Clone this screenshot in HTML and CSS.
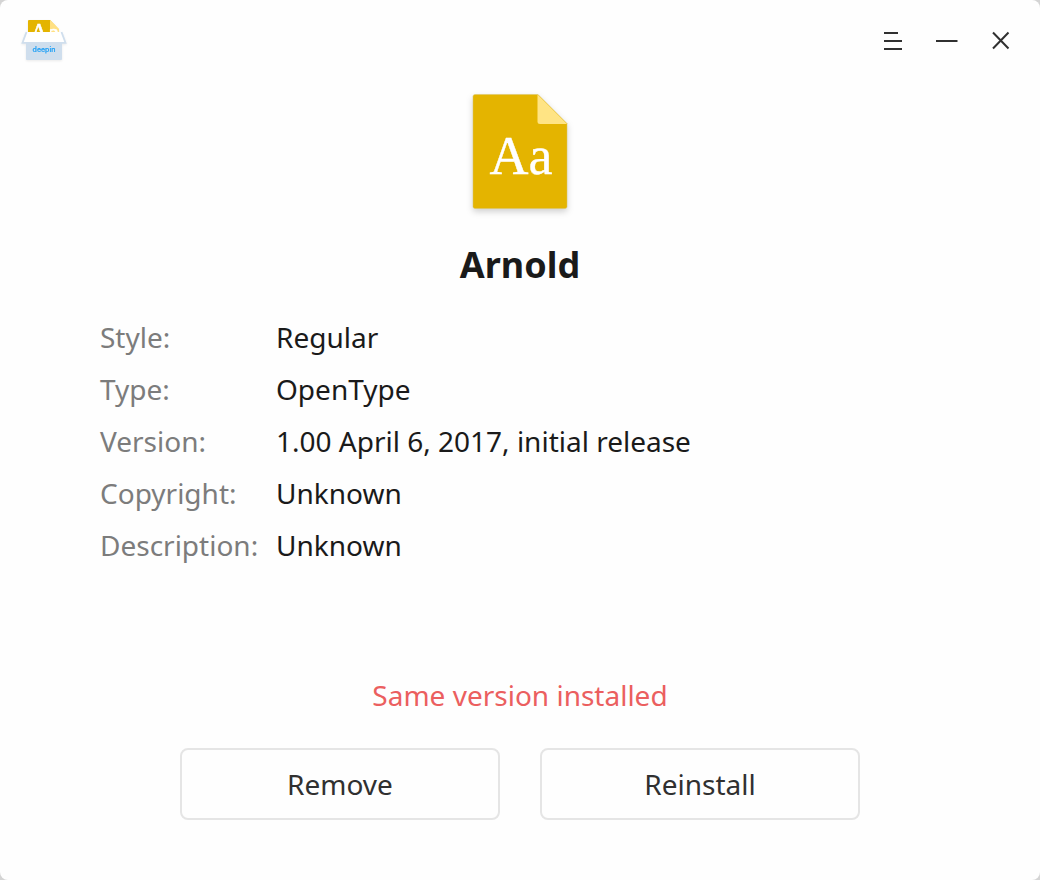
FILE: index.html
```
<!DOCTYPE html>
<html lang="en">
<head>
<meta charset="utf-8">
<meta name="viewport" content="width=device-width, initial-scale=1">
<title>Arnold</title>
<link rel="stylesheet" href="styles.css">
</head>
<body>
<div class="window">
  <header class="titlebar">
    <svg class="app-logo" width="48" height="48" viewBox="0 0 48 48" aria-hidden="true">
      <path fill="#e4b400" d="M9 4h21l8.500 9v8H8V5a1 1 0 0 1 1-1z"/>
      <path fill="#ffe082" d="M30 4l9 9v3h-9z"/>
      <text class="logo-letters" x="10" y="25">Aa</text>
      <path fill="#fff" d="M7 16h34l4 11H3z"/>
      <path fill="none" stroke="#cfdeed" stroke-width="1.800" d="M6.500 16L2.500 26.800h43L41.500 16"/>
      <path fill="#cfdeed" d="M6 26h36v17a1 1 0 0 1-1 1H7a1 1 0 0 1-1-1z"/>
      <text class="logo-name" x="24" y="36">deepin</text>
    </svg>
    <div class="window-controls">
      <button class="control" type="button" aria-label="Menu">
        <svg width="24" height="24" viewBox="0 0 24 24"><path d="M3 4h14M3 12h18M3 20h18"/></svg>
      </button>
      <button class="control" type="button" aria-label="Minimize">
        <svg width="24" height="24" viewBox="0 0 24 24"><path d="M1 12h21.500"/></svg>
      </button>
      <button class="control" type="button" aria-label="Close">
        <svg width="24" height="24" viewBox="0 0 24 24"><path d="M4 3.500l15.500 16M19.500 3.500L4 19.500"/></svg>
      </button>
    </div>
  </header>
  <main class="content">
    <svg class="font-icon" width="104" height="124" viewBox="0 0 104 124" aria-hidden="true">
      <path fill="#e4b400" stroke="#d9c466" stroke-width=".5" d="M7 2.500h63l29 29v83a2 2 0 0 1-2 2H7a2 2 0 0 1-2-2v-110a2 2 0 0 1 2-2z"/>
      <path fill="#ffe484" d="M69.500 2.500L99 32H72a2.500 2.500 0 0 1-2.500-2.500z"/>
      <text class="icon-letters" x="53" y="82">Aa</text>
    </svg>
    <h1 class="font-name">Arnold</h1>
    <dl class="details">
      <dt>Style:</dt><dd>Regular</dd>
      <dt>Type:</dt><dd>OpenType</dd>
      <dt>Version:</dt><dd>1.00 April 6, 2017, initial release</dd>
      <dt>Copyright:</dt><dd>Unknown</dd>
      <dt>Description:</dt><dd>Unknown</dd>
    </dl>
  </main>
  <footer class="footer">
    <p class="status" role="status">Same version installed</p>
    <div class="actions">
      <button class="action" type="button">Remove</button>
      <button class="action" type="button">Reinstall</button>
    </div>
  </footer>
</div>
</body>
</html>
```
FILE: styles.css
```
* {
  box-sizing: border-box;
}

body {
  margin: 0;
  background: #d4d4d4;
  color: #1a1a1a;
  font: 28px/52px "Noto Sans", sans-serif;
}

.window {
  display: flex;
  flex-direction: column;
  min-height: 100vh;
  background: #fefefe;
  border-radius: 8px;
}

.titlebar {
  display: flex;
  align-items: center;
  justify-content: space-between;
  height: 80px;
  padding: 0 12px 0 20px;
}

.logo-letters {
  fill: #fff;
  stroke: #fff;
  stroke-width: .5;
  font: 25px "Liberation Serif", serif;
}

.logo-name {
  fill: #1e9ff5;
  stroke: #1e9ff5;
  stroke-width: .2;
  font: 500 7px Inter, sans-serif;
  text-anchor: middle;
}

.app-logo {
  filter: drop-shadow(0 1px 1px rgba(0, 0, 0, .08));
}

.window-controls {
  display: flex;
}

.control {
  display: grid;
  place-items: center;
  width: 54px;
  height: 80px;
  padding: 2px 0 0;
  border: 0;
  background: none;
}

.control path {
  fill: none;
  stroke: #303030;
  stroke-width: 2;
}

.content {
  display: flex;
  flex: 1;
  flex-direction: column;
  align-items: center;
  padding: 12px 100px 0;
}

.font-icon {
  filter: drop-shadow(0 3px 3px rgba(0, 0, 0, .18));
}

.icon-letters {
  fill: #fff;
  stroke: #fff;
  stroke-width: .4;
  font: 54px "Liberation Serif", serif;
  text-anchor: middle;
}

.font-name {
  margin: 23px 0 20px;
  font-size: 36px;
  line-height: 52px;
}

.details {
  display: grid;
  grid-template-columns: 176px 1fr;
  width: 100%;
  margin: 0;
}

.details dt {
  color: #7c7c7c;
}

.details dd {
  margin: 0;
}

.footer {
  padding: 0 100px 60px;
}

.status {
  margin: 0 0 27px;
  color: #eb5f5f;
  text-align: center;
}

.action {
  flex: 0 1 320px;
  height: 72px;
  border: 2px solid #e5e5e5;
  border-radius: 8px;
  background: #fefefe;
  color: #303030;
  font: inherit;
}

.actions {
  display: flex;
  justify-content: center;
  gap: 40px;
}
```
